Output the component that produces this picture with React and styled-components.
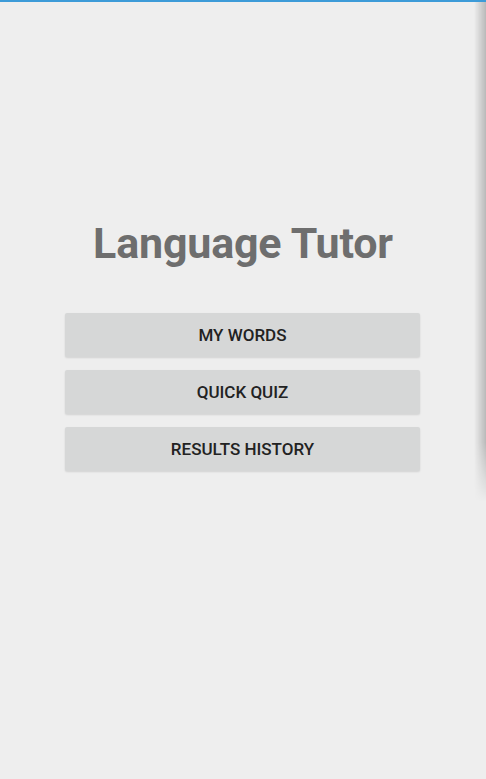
import React from 'react';
import styled, { createGlobalStyle } from 'styled-components';

const GlobalStyle = createGlobalStyle`
  html, body {
    margin: 0;
    padding: 0;
    background: #eeeeee;
  }
  body {
    font-family: Roboto, "Liberation Sans", sans-serif;
  }
`;

const Screen = styled.div`
  position: relative;
  width: 486px;
  height: 779px;
  background: #eeeeee;
  border-top: 2px solid #3d9bd8;
  box-sizing: border-box;
  overflow: hidden;
  display: flex;
  flex-direction: column;
  align-items: center;
  padding-top: 211px;
`;

const EdgeShadow = styled.div`
  position: absolute;
  top: 0;
  right: 0;
  width: 12px;
  height: 500px;
  background: linear-gradient(to right, rgba(0, 0, 0, 0), rgba(0, 0, 0, 0.22));
  -webkit-mask-image: linear-gradient(to bottom, #000 88%, transparent 100%);
  mask-image: linear-gradient(to bottom, #000 88%, transparent 100%);
  pointer-events: none;
`;

const Title = styled.h1`
  margin: 0;
  font-size: 43px;
  line-height: 60px;
  font-weight: 700;
  color: #6e6e6e;
  letter-spacing: -0.2px;
`;

const Menu = styled.div`
  display: flex;
  flex-direction: column;
  gap: 13px;
  margin-top: 40px;
  margin-right: 1px;
`;

const MenuButton = styled.button`
  width: 355px;
  height: 44px;
  border: none;
  border-radius: 2px;
  background: #d6d7d7;
  box-shadow: 0 1px 2px rgba(0, 0, 0, 0.12);
  font-family: Roboto, "Liberation Sans", sans-serif;
  font-size: 17px;
  font-weight: 500;
  color: #222222;
  text-transform: uppercase;
  cursor: pointer;
`;

const items = ['My Words', 'Quick Quiz', 'Results History'];

export default function App() {
  return (
    <>
      <GlobalStyle />
      <Screen>
        <Title>Language Tutor</Title>
        <Menu>
          {items.map((label) => (
            <MenuButton key={label}>{label}</MenuButton>
          ))}
        </Menu>
        <EdgeShadow />
      </Screen>
    </>
  );
}
